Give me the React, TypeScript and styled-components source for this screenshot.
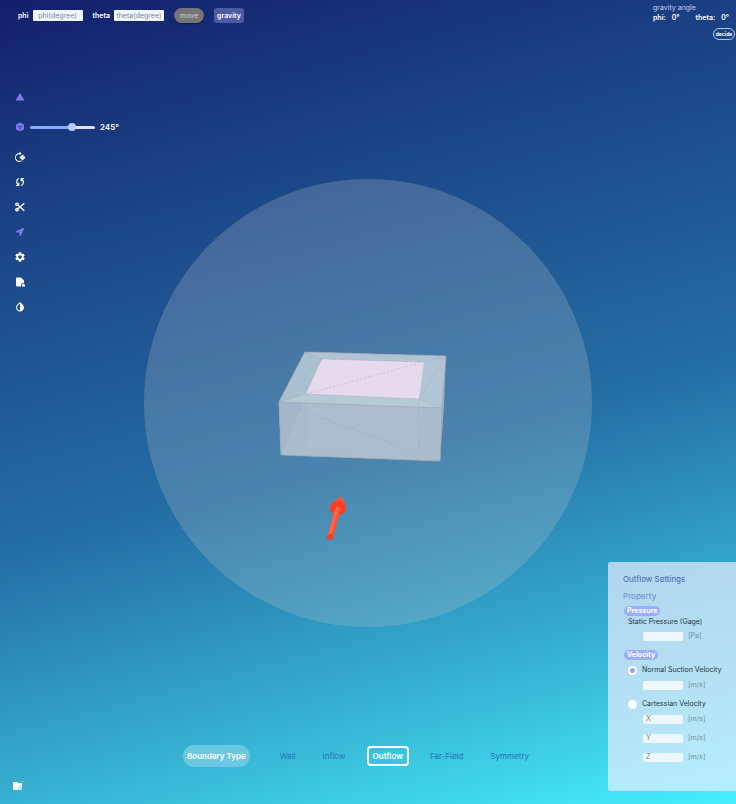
import React, { useState } from 'react';
import styled, { createGlobalStyle, css } from 'styled-components';
import { FaLocationArrow } from 'react-icons/fa';
import { MdInvertColors, MdRotate90DegreesCw, MdSettings } from 'react-icons/md';

const GlobalStyle = createGlobalStyle`
  *, *::before, *::after { box-sizing: border-box; }
  body { margin: 0; font-family: Inter, "Open Sans", sans-serif; }
  button, input { font: inherit; }
`;

const Page = styled.div`
  position: relative;
  min-height: 100vh;
  display: grid;
  grid-template-columns: 130px 1fr 128px;
  grid-template-rows: auto 1fr auto;
  overflow: hidden;
  color: #fff;
  font-size: 7px;
  line-height: 10px;
  background: linear-gradient(165deg, #131e6b 0%, #1a3f82 20%, #246fa4 56%, #36b1d2 80%, #45effc 100%);
`;

const Scene = styled.svg`
  position: absolute;
  inset: 0;
  width: 100%;
  height: 100%;
`;

const Header = styled.header`
  position: relative;
  grid-column: 1 / -1;
  display: flex;
  justify-content: space-between;
  align-items: flex-start;
`;

const AngleForm = styled.form`
  display: flex;
  align-items: center;
  padding: 8px 0 0 18px;
  font-weight: 600;
`;

const AngleField = styled.label`
  display: flex;
  align-items: center;
  gap: 4px;
  margin-right: 10px;
`;

const AngleInput = styled.input`
  width: 50px;
  height: 11px;
  padding: 0;
  border: 0;
  border-radius: 1px;
  background: #f0f8ff;
  color: #334;
  font-weight: 400;
  text-align: center;
  &::placeholder { color: #85858c; opacity: 1; }
`;

const HeaderButton = styled.button<{ $round?: boolean }>`
  height: 15px;
  width: 30px;
  padding: 0;
  border: 0;
  color: #fff;
  font-weight: 600;
  border-radius: 3px;
  background: #4c5ba8;
  ${({ $round }) => $round && css`
    margin-right: 10px;
    border-radius: 8px;
    background: #757575;
    color: #c4c4c4;
    font-weight: 500;
    box-shadow: 0 1px 2px rgba(0, 0, 0, 0.4);
  `}
`;

const Readout = styled.section`
  width: 83px;
  padding-top: 3px;
  display: flex;
  flex-direction: column;
`;

const ReadoutTitle = styled.span`
  color: #c9d2ea;
`;

const ReadoutValues = styled.div`
  display: flex;
  justify-content: space-between;
  padding-right: 7px;
  font-weight: 600;
`;

const ReadoutPair = styled.span`
  display: flex;
  gap: 6px;
`;

const DecideButton = styled.button`
  align-self: flex-end;
  width: 22px;
  height: 12px;
  margin: 5px 1px 0 0;
  padding: 0;
  border: 1px solid #b4c6e2;
  border-radius: 6px;
  background: transparent;
  color: #fff;
  font-size: 5px;
  font-weight: 700;
  line-height: 8px;
`;

const Tools = styled.nav`
  position: relative;
  display: flex;
  flex-direction: column;
  align-items: flex-start;
  gap: 15px;
  padding: 52px 0 0 15px;
`;

const ToolButton = styled.button<{ $active?: boolean; $spaced?: boolean }>`
  display: flex;
  align-items: center;
  justify-content: center;
  width: 10px;
  height: 10px;
  padding: 0;
  border: 0;
  background: transparent;
  font-size: 12px;
  color: ${({ $active }) => ($active ? '#7c79f2' : '#fff')};
  margin-bottom: ${({ $spaced }) => ($spaced ? '5px' : '0')};
  svg { flex: none; }
`;

const SliderRow = styled.div`
  display: flex;
  align-items: center;
  gap: 5px;
  margin-bottom: 5px;
`;

const AngleSlider = styled.input`
  appearance: none;
  width: 65px;
  height: 8px;
  margin: 0;
  background: transparent;
  &::-webkit-slider-runnable-track {
    height: 3px;
    border-radius: 2px;
    background: linear-gradient(90deg, #82abff 0 66%, #e3e1dc 66%);
  }
  &::-webkit-slider-thumb {
    appearance: none;
    width: 8px;
    height: 8px;
    margin-top: -3px;
    border-radius: 50%;
    background: #b9cbff;
  }
`;

const SliderValue = styled.output`
  font-size: 8px;
  font-weight: 600;
`;

const FolderButton = styled.button`
  position: relative;
  grid-row: 3;
  grid-column: 1;
  align-self: end;
  width: 10px;
  height: 10px;
  margin: 0 0 13px 13px;
  padding: 0;
  border: 0;
  background: transparent;
  line-height: 0;
`;

const BoundaryBar = styled.nav`
  position: relative;
  grid-row: 3;
  grid-column: 2;
  align-self: end;
  justify-self: center;
  display: flex;
  align-items: center;
  white-space: nowrap;
  font-size: 8px;
  padding: 0 20px 0 0;
  margin-bottom: 37px;
`;

const BoundaryTitle = styled.span`
  padding: 6px 4px;
  margin-right: 24px;
  border-radius: 11px;
  background: #6cc8e2;
  font-weight: 600;
`;

const BoundaryTabs = styled.div`
  display: flex;
  align-items: center;
  gap: 15px;
`;

const BoundaryTab = styled.button<{ $active: boolean }>`
  height: 20px;
  padding: 0 4px;
  border: 2px solid ${({ $active }) => ($active ? '#fff' : 'transparent')};
  border-radius: 4px;
  background: transparent;
  color: ${({ $active }) => ($active ? '#fff' : '#2e6fb5')};
  font-weight: ${({ $active }) => ($active ? 600 : 400)};
`;

const Panel = styled.aside`
  position: relative;
  grid-row: 2 / 4;
  grid-column: 3;
  align-self: end;
  margin-bottom: 13px;
  padding: 11px 0 20px 15px;
  border-radius: 2px 0 0 2px;
  background: linear-gradient(165deg, #b2d5ed, #b5e0f4 50%, #b5eefd);
  color: #253641;
  white-space: nowrap;
`;

const PanelTitle = styled.h2`
  margin: 0 0 6px;
  color: #4661b8;
  font-size: 8px;
  line-height: 12px;
  font-weight: 400;
`;

const PanelSubtitle = styled.h3`
  margin: 0 0 5px;
  color: #7b91de;
  font-size: 8px;
  line-height: 10px;
  font-weight: 500;
`;

const Badge = styled.h4`
  width: max-content;
  margin: 0 0 0 1px;
  padding: 0 3px;
  border-radius: 5px;
  background: #9cadfb;
  color: #fff;
  font-size: 7px;
  font-weight: 700;
`;

const FieldLabel = styled.label`
  display: block;
  margin: 1px 0 4px 5px;
`;

const FieldRow = styled.div`
  display: flex;
  align-items: center;
  gap: 5px;
  height: 10px;
  margin: 0 0 9px 20px;
  color: #6f8ea8;
`;

const ValueInput = styled.input`
  width: 40px;
  height: 9px;
  padding: 0 3px;
  border: 0;
  border-radius: 2px;
  background: #f0f8ff;
  color: #333;
  &::placeholder { color: #777c82; opacity: 1; }
`;

const RadioRow = styled.label`
  display: flex;
  align-items: center;
  gap: 5px;
  height: 10px;
  margin: 5px 0 5px 5px;
`;

const Radio = styled.input`
  appearance: none;
  width: 9px;
  height: 9px;
  margin: 0;
  border-radius: 50%;
  background: #fff;
  &:checked { background: radial-gradient(circle, #91a7f8 0 2px, #fff 3px); }
`;

function Viewport() {
  return (
    <Scene viewBox="0 0 736 804" aria-hidden="true">
      <circle cx="368" cy="403" r="224" fill="#bcc2cc" fillOpacity=".25" />
      <polygon points="305,352 446,356 442,408 440,461 281,455 279,402" fill="#abbdce" />
      <polygon points="305,352 446,356 442,408 279,402" fill="#b0c4d4" />
      <polygon points="305,352 322,359 306,394 279,402" fill="#a9c0d0" />
      <polygon points="279,402 306,394 419,399 442,408" fill="#b4cad7" />
      <polygon points="446,356 442,408 440,461 444,405" fill="#9eb1c2" />
      <polygon points="279,402 442,408 440,461 281,455" fill="#abbccd" />
      <polygon points="279,402 303,403 281,455" fill="#a3b6ca" />
      <polygon points="306,408 419,408 418,452 306,448" fill="#abbdcf" />
      <polygon points="322,359 424,362 419,399 306,394" fill="#e7daee" />
      <g fill="none" stroke="#a3a8b0" strokeWidth=".7">
        <path d="M305 352 446 356 442 408 440 461 281 455 279 402Z M279 402 442 408" />
        <path d="M322 359 424 362M306 394 419 399M305 352 322 359M279 402 322 359M424 362 446 356M446 356 419 399 442 408M279 402 306 394" strokeDasharray="2 1" opacity=".8" />
        <path d="M306 394 424 362" stroke="#bfb2c4" strokeDasharray="2 2" />
        <path d="M300 410 440 461" stroke="#98adbb" strokeDasharray="2 1" />
        <path d="M350 429 368 421M306 400V447M419 400 418 451M424 404 419 448" stroke="#9eb3c5" opacity=".6" />
      </g>
      <polygon points="341,496 346,506 331,504" fill="#fd5136" />
      <ellipse cx="338" cy="508" rx="8" ry="7" fill="#fe3e24" />
      <path d="M338 507 330 537" stroke="#ff6345" strokeWidth="5" />
      <path d="M340 509 332 537" stroke="#ff4f32" strokeWidth="2" />
      <circle cx="330" cy="537" r="3" fill="#ff3b20" />
    </Scene>
  );
}

function TriangleIcon() {
  return <svg width="10" height="8" viewBox="0 0 10 8"><path d="M5 0 9.5 7.5H.5Z" fill="currentColor" /></svg>;
}

function CubeIcon() {
  return (
    <svg width="10" height="10" viewBox="0 0 10 10">
      <path d="M5 .5 9 2.5V7.5L5 9.5 1 7.5V2.5Z" fill="currentColor" />
      <path d="M2.5 3.8 5 5 7.5 3.8M5 5V8.5" fill="none" stroke="#2a3a8c" strokeWidth=".8" />
    </svg>
  );
}

function SyncIcon() {
  return (
    <svg width="10" height="10" viewBox="0 0 10 10" fill="none" stroke="currentColor" strokeWidth="1.2">
      <path d="M4 1.5C1.5 2 .8 5.5 3 8M1 8.5H3.8V5.8M6 8.5C8.500 8 9.200 4.500 7 2M9 1.500H6.200V4.200" />
    </svg>
  );
}

function ScissorsIcon() {
  return (
    <svg width="10" height="10" viewBox="0 0 10 10" fill="none" stroke="currentColor" strokeWidth="1.3">
      <circle cx="2" cy="2.3" r="1.2" />
      <circle cx="2" cy="7.7" r="1.2" />
      <path d="M3 3.200 9.300 8.800M3 6.800 9.300 1.200" />
    </svg>
  );
}

function FileIcon() {
  return (
    <svg width="10" height="10" viewBox="0 0 10 10">
      <path d="M2 .5H6L9 3.5V6H7.500L6 7.500V9.500H2A1 1 0 0 1 1 8.500V1.500A1 1 0 0 1 2 .5Z" fill="currentColor" />
      <path d="M7 7.500 8.500 6.500 10 8V9.500H7Z" fill="currentColor" />
    </svg>
  );
}

function FolderIcon() {
  return (
    <svg width="10" height="10" viewBox="0 0 10 10">
      <path d="M0 1H4L5 2H9V9H0Z" fill="#fff" />
      <path d="M9 0H10V1H9Z" fill="#fff" opacity=".8" />
      <path d="M5.500 9V6.500L8 4.500M7 6.500H8.500V8.500H7" stroke="#6fc8e0" fill="none" strokeWidth=".8" />
    </svg>
  );
}

const tabs = ['Wall', 'Inflow', 'Outflow', 'Far-Field', 'Symmetry'];

export default function App() {
  const [tab, setTab] = useState('Outflow');
  return (
    <>
      <GlobalStyle />
      <Page>
        <Viewport />
        <Header>
          <AngleForm onSubmit={(e) => e.preventDefault()}>
            <AngleField>phi<AngleInput placeholder="phi(degree)" /></AngleField>
            <AngleField>theta<AngleInput placeholder="theta(degree)" /></AngleField>
            <HeaderButton type="submit" $round>move</HeaderButton>
            <HeaderButton type="button">gravity</HeaderButton>
          </AngleForm>
          <Readout>
            <ReadoutTitle>gravity angle</ReadoutTitle>
            <ReadoutValues>
              <ReadoutPair><span>phi:</span><span>0°</span></ReadoutPair>
              <ReadoutPair><span>theta:</span><span>0°</span></ReadoutPair>
            </ReadoutValues>
            <DecideButton type="button">decide</DecideButton>
          </Readout>
        </Header>

        <Tools aria-label="Tools">
          <ToolButton $active $spaced aria-label="Mesh"><TriangleIcon /></ToolButton>
          <SliderRow>
            <ToolButton $active aria-label="Box"><CubeIcon /></ToolButton>
            <AngleSlider type="range" min="0" max="360" defaultValue="239" aria-label="Angle" />
            <SliderValue>245°</SliderValue>
          </SliderRow>
          <ToolButton aria-label="Rotate"><MdRotate90DegreesCw /></ToolButton>
          <ToolButton aria-label="Sync"><SyncIcon /></ToolButton>
          <ToolButton aria-label="Cut"><ScissorsIcon /></ToolButton>
          <ToolButton $active aria-label="Direction"><FaLocationArrow size={8} /></ToolButton>
          <ToolButton aria-label="Settings"><MdSettings /></ToolButton>
          <ToolButton aria-label="Export file"><FileIcon /></ToolButton>
          <ToolButton aria-label="Contrast"><MdInvertColors /></ToolButton>
        </Tools>

        <Panel>
          <PanelTitle>Outflow Settings</PanelTitle>
          <PanelSubtitle>Property</PanelSubtitle>
          <Badge>Pressure</Badge>
          <FieldLabel htmlFor="static">Static Pressure (Gage)</FieldLabel>
          <FieldRow><ValueInput id="static" />[Pa]</FieldRow>
          <Badge>Velocity</Badge>
          <RadioRow><Radio type="radio" name="velocity" defaultChecked />Normal Suction Velocity</RadioRow>
          <FieldRow><ValueInput aria-label="Normal velocity" />[m/s]</FieldRow>
          <RadioRow><Radio type="radio" name="velocity" />Cartessian Velocity</RadioRow>
          {['X', 'Y', 'Z'].map((axis) => (
            <FieldRow key={axis}><ValueInput placeholder={axis} aria-label={axis} />[m/s]</FieldRow>
          ))}
        </Panel>

        <FolderButton aria-label="Open folder"><FolderIcon /></FolderButton>
        <BoundaryBar aria-label="Boundary type">
          <BoundaryTitle>Boundary Type</BoundaryTitle>
          <BoundaryTabs>
            {tabs.map((name) => (
              <BoundaryTab key={name} type="button" $active={name === tab} onClick={() => setTab(name)}>{name}</BoundaryTab>
            ))}
          </BoundaryTabs>
        </BoundaryBar>
      </Page>
    </>
  );
}
